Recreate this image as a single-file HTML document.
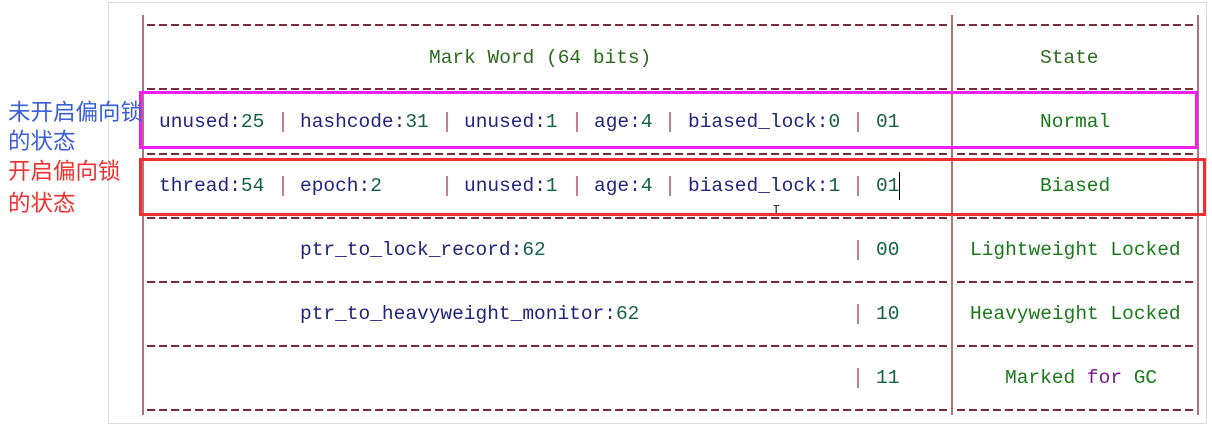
<!DOCTYPE html>
<html><head><meta charset="utf-8"><style>
body{margin:0;width:1212px;height:412px;background:#fff;position:relative;overflow:hidden;font-family:"Liberation Mono",monospace;font-size:19.5px}
.t{position:absolute;line-height:24px;white-space:pre;margin-top:1px}
.id{color:#23237f}.n{color:#14614a}.g{color:#2d6b1f}.s{color:#1a7a1a}.p{color:#7a1a8a}
.d{position:absolute;height:2px;background:repeating-linear-gradient(90deg,#7b2c3c 0 8px,transparent 8px 12px)}
.v{position:absolute;width:2px;background:#b5707a}
.pi{position:absolute;width:2px;height:20px;background:#c08088;margin-top:1px}
.cj{position:absolute;font-family:"Liberation Sans","Noto Sans CJK SC",sans-serif;font-size:22.5px;line-height:28px;white-space:nowrap}
</style></head><body>
<div style="position:absolute;left:108px;top:2px;width:1097px;height:420px;border:1px solid #ddd"></div>
<div class="d" style="left:147px;top:24px;width:800px"></div><div class="d" style="left:957px;top:24px;width:236px"></div>
<div class="d" style="left:147px;top:88px;width:800px"></div><div class="d" style="left:957px;top:88px;width:236px"></div>
<div class="d" style="left:147px;top:153px;width:800px"></div><div class="d" style="left:957px;top:153px;width:236px"></div>
<div class="d" style="left:147px;top:217px;width:800px"></div><div class="d" style="left:957px;top:217px;width:236px"></div>
<div class="d" style="left:147px;top:281px;width:800px"></div><div class="d" style="left:957px;top:281px;width:236px"></div>
<div class="d" style="left:147px;top:345px;width:800px"></div><div class="d" style="left:957px;top:345px;width:236px"></div>
<div class="d" style="left:147px;top:409px;width:800px"></div><div class="d" style="left:957px;top:409px;width:236px"></div>
<div class="v" style="left:142px;top:15px;height:400px"></div>
<div class="v" style="left:951px;top:15px;height:400px"></div>
<div class="v" style="left:1197px;top:15px;height:400px"></div>
<div class="t g" style="left:429px;top:45px">Mark Word (64 bits)</div>
<div class="t g" style="left:1040px;top:45px">State</div>
<div class="t" style="left:159px;top:109px"><span class="id">unused:</span><span class="n">25</span></div>
<div class="pi" style="left:282px;top:111px"></div>
<div class="t" style="left:300px;top:109px"><span class="id">hashcode:</span><span class="n">31</span></div>
<div class="pi" style="left:446px;top:111px"></div>
<div class="t" style="left:464px;top:109px"><span class="id">unused:</span><span class="n">1</span></div>
<div class="pi" style="left:576px;top:111px"></div>
<div class="t" style="left:594px;top:109px"><span class="id">age:</span><span class="n">4</span></div>
<div class="pi" style="left:669px;top:111px"></div>
<div class="t" style="left:688px;top:109px"><span class="id">biased_lock:</span><span class="n">0</span></div>
<div class="pi" style="left:857px;top:111px"></div>
<div class="t n" style="left:876px;top:109px">01</div>
<div class="t s" style="left:1040px;top:109px">Normal</div>
<div class="t" style="left:159px;top:173px"><span class="id">thread:</span><span class="n">54</span></div>
<div class="pi" style="left:282px;top:175px"></div>
<div class="t" style="left:300px;top:173px"><span class="id">epoch:</span><span class="n">2</span></div>
<div class="pi" style="left:446px;top:175px"></div>
<div class="t" style="left:464px;top:173px"><span class="id">unused:</span><span class="n">1</span></div>
<div class="pi" style="left:576px;top:175px"></div>
<div class="t" style="left:594px;top:173px"><span class="id">age:</span><span class="n">4</span></div>
<div class="pi" style="left:669px;top:175px"></div>
<div class="t" style="left:688px;top:173px"><span class="id">biased_lock:</span><span class="n">1</span></div>
<div class="pi" style="left:857px;top:175px"></div>
<div class="t n" style="left:876px;top:173px">01</div>
<div style="position:absolute;left:899px;top:172px;width:1px;height:28px;background:#000"></div>
<div class="t s" style="left:1040px;top:173px">Biased</div>
<div class="t" style="left:772px;top:198px;font-size:14px;color:#333">I</div>
<div class="t id" style="left:300px;top:237px">ptr_to_lock_record:<span class="n">62</span></div>
<div class="pi" style="left:857px;top:239px"></div>
<div class="t n" style="left:876px;top:237px">00</div>
<div class="t s" style="left:970px;top:237px">Lightweight Locked</div>
<div class="t id" style="left:300px;top:301px">ptr_to_heavyweight_monitor:<span class="n">62</span></div>
<div class="pi" style="left:857px;top:303px"></div>
<div class="t n" style="left:876px;top:301px">10</div>
<div class="t s" style="left:970px;top:301px">Heavyweight Locked</div>
<div class="pi" style="left:857px;top:367px"></div>
<div class="t n" style="left:876px;top:365px">11</div>
<div class="t s" style="left:1005px;top:365px">Marked <span class="p">for</span> GC</div>
<div style="position:absolute;left:139px;top:91px;width:1053px;height:52px;border:3px solid #f01ff0"></div>
<div style="position:absolute;left:139px;top:158px;width:1061px;height:52px;border:3px solid #f03030"></div>
<div class="cj" style="left:8px;top:99px;color:#3a5fd8">未开启偏向锁</div>
<div class="cj" style="left:8px;top:128px;color:#3a5fd8">的状态</div>
<div class="cj" style="left:8px;top:158px;color:#f03030">开启偏向锁</div>
<div class="cj" style="left:8px;top:190px;color:#f03030">的状态</div>
</body></html>
